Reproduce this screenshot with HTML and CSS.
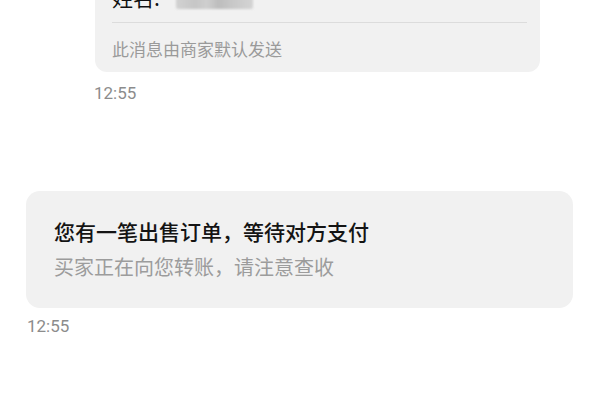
FILE: index.html
```html
<!DOCTYPE html>
<html lang="zh-CN">
<head>
<meta charset="utf-8">
<link rel="stylesheet" href="styles.css">
</head>
<body>
<div class="chat">
  <div class="card card-top">
    <div class="top-row">
      <span class="top-label">姓名:</span>
      <span class="blur"></span>
    </div>
    <div class="divider"></div>
    <div class="note">此消息由商家默认发送</div>
  </div>
  <div class="time time-top">12:55</div>

  <div class="card card-order">
    <div class="title">您有一笔出售订单，等待对方支付</div>
    <div class="sub">买家正在向您转账，请注意查收</div>
  </div>
  <div class="time time-order">12:55</div>
</div>
</body>
</html>
```
FILE: styles.css
```css
html, body {
  margin: 0;
  padding: 0;
  background: #ffffff;
}
body {
  width: 600px;
  height: 400px;
  overflow: hidden;
  font-family: "Noto Sans CJK SC", "Noto Sans", sans-serif;
}
.chat {
  display: flex;
  flex-direction: column;
  align-items: flex-start;
}
.card {
  background: #f1f1f1;
  box-sizing: border-box;
}
.card-top {
  margin-top: -17px;
  margin-left: 95px;
  width: 445px;
  padding: 0 13px 11px 17px;
  border-radius: 0 0 12px 12px;
}
.top-row {
  display: flex;
  align-items: center;
  height: 28px;
  gap: 16px;
}
.top-label {
  font-size: 21px;
  line-height: 28px;
  color: #111;
}
.blur {
  width: 77px;
  height: 24px;
  background: linear-gradient(90deg, #d2d2d2 0%, #c6c6c6 25%, #cfcfcf 40%, #bdbdbd 55%, #c9c9c9 75%, #d4d4d4 100%);
  filter: blur(1px);
  border-radius: 2px;
}
.divider {
  margin-top: 11px;
  height: 1px;
  background: #dcdcdc;
}
.note {
  margin-top: 14px;
  font-size: 17px;
  line-height: 24px;
  color: #9a9a9a;
}
.time {
  font-family: Roboto, "Noto Sans", sans-serif;
  font-size: 17px;
  line-height: 20px;
  color: #8c8c8c;
}
.time-top {
  margin-top: 11px;
  margin-left: 94px;
}
.card-order {
  margin-top: 88px;
  margin-left: 26px;
  width: 547px;
  padding: 26px 28px 28px 28px;
  border-radius: 14px;
}
.title {
  font-size: 21px;
  line-height: 28px;
  font-weight: 500;
  color: #141414;
}
.sub {
  margin-top: 9px;
  font-size: 20px;
  line-height: 26px;
  color: #9c9c9c;
}
.time-order {
  margin-top: 8px;
  margin-left: 27px;
}
```
